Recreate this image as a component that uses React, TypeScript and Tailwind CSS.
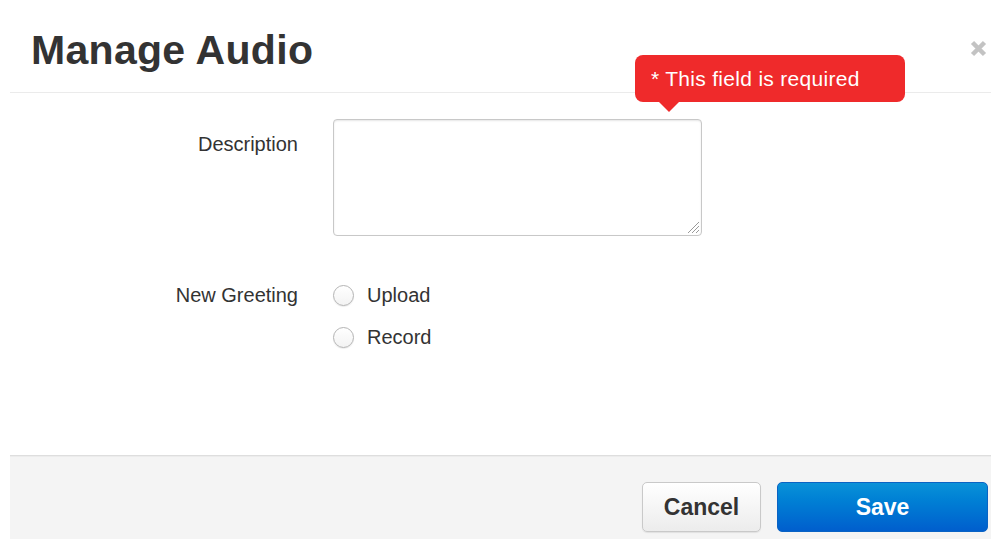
import React from "react";

function CloseIcon() {
  return (
    <svg width="17" height="17" viewBox="0 0 17 17" aria-hidden="true">
      <path d="M2.5 2.5 L14.5 14.5 M14.5 2.5 L2.5 14.5" stroke="#c3c3c3" strokeWidth="4.5" strokeLinecap="butt" />
    </svg>
  );
}

function ResizeGrip() {
  return (
    <svg width="14" height="14" viewBox="0 0 14 14" className="pointer-events-none absolute bottom-[2px] right-[2px]" aria-hidden="true">
      <path d="M13 2 L2 13 M13 6 L6 13 M13 10 L10 13" stroke="#9a9a9a" strokeWidth="1" />
    </svg>
  );
}

function Radio({ label, name }: { label: string; name: string }) {
  return (
    <label className="flex h-[30px] items-center">
      <input
        type="radio"
        name={name}
        className="m-0 h-[21px] w-[21px] shrink-0 appearance-none rounded-full border border-[#b4b4b4] bg-gradient-to-b from-white to-[#f3f3f3] shadow-[0_1px_1px_rgba(0,0,0,0.08)]"
      />
      <span className="ml-[13px] text-[20px] leading-[24px] text-[#333]">{label}</span>
    </label>
  );
}

export default function App() {
  return (
    <div className="min-h-screen bg-white pl-[10px] font-['Liberation_Sans',Arial,sans-serif]">
      <div className="relative flex h-[539px] flex-col bg-white">
        {/* Header */}
        <div className="flex h-[93px] shrink-0 items-start justify-between border-b border-[#ebebeb]">
          <h1 className="pl-[21px] pt-[30px] text-[41px] font-bold leading-[40px] tracking-[0.3px] text-[#333]">
            Manage Audio
          </h1>
          <button className="mr-[4px] mt-[40px] p-0" aria-label="Close">
            <CloseIcon />
          </button>
        </div>

        {/* Validation tooltip */}
        <div className="absolute left-[625px] top-[55px] z-10">
          <div className="flex h-[47px] w-[270px] items-center rounded-[8px] bg-[#ef2a2b] pl-[16px] text-[21px] leading-[24px] tracking-[0.3px] text-white">
            * This field is required
          </div>
          <div className="ml-[24px] h-0 w-0 border-x-[10px] border-t-[10px] border-x-transparent border-t-[#ef2a2b]" />
        </div>

        {/* Form body */}
        <div className="flex-1 pt-[26px]">
          <div className="flex">
            <div className="w-[288px] pt-[13px] text-right text-[20px] leading-[24px] text-[#333]">Description</div>
            <div className="relative ml-[35px] h-[117px] w-[369px]">
              <textarea className="block h-full w-full resize-none rounded-[4px] border border-[#c8c8c8] bg-white shadow-[inset_0_1px_2px_rgba(0,0,0,0.1)] outline-none" />
              <ResizeGrip />
            </div>
          </div>

          <div className="mt-[44px] flex">
            <div className="w-[288px] text-right text-[20px] leading-[30px] text-[#333]">New Greeting</div>
            <div className="ml-[35px] flex flex-col gap-[12px]">
              <Radio label="Upload" name="greeting" />
              <Radio label="Record" name="greeting" />
            </div>
          </div>
        </div>

        {/* Footer */}
        <div className="flex h-[84px] shrink-0 justify-end gap-[16px] border-t border-[#dedede] bg-[#f4f4f4] pr-[3px] pt-[26px] shadow-[inset_0_1px_0_#ececec]">
          <button className="h-[50px] w-[119px] rounded-[5px] border border-[#c9c9c9] bg-gradient-to-b from-white to-[#ececec] text-[23px] font-bold text-[#333] shadow-[0_1px_1px_rgba(0,0,0,0.08)]">
            Cancel
          </button>
          <button className="h-[50px] w-[211px] rounded-[5px] border border-[#0a63c4] bg-gradient-to-b from-[#0b92d8] to-[#005ecd] text-[23px] font-bold text-white">
            Save
          </button>
        </div>
      </div>
    </div>
  );
}
